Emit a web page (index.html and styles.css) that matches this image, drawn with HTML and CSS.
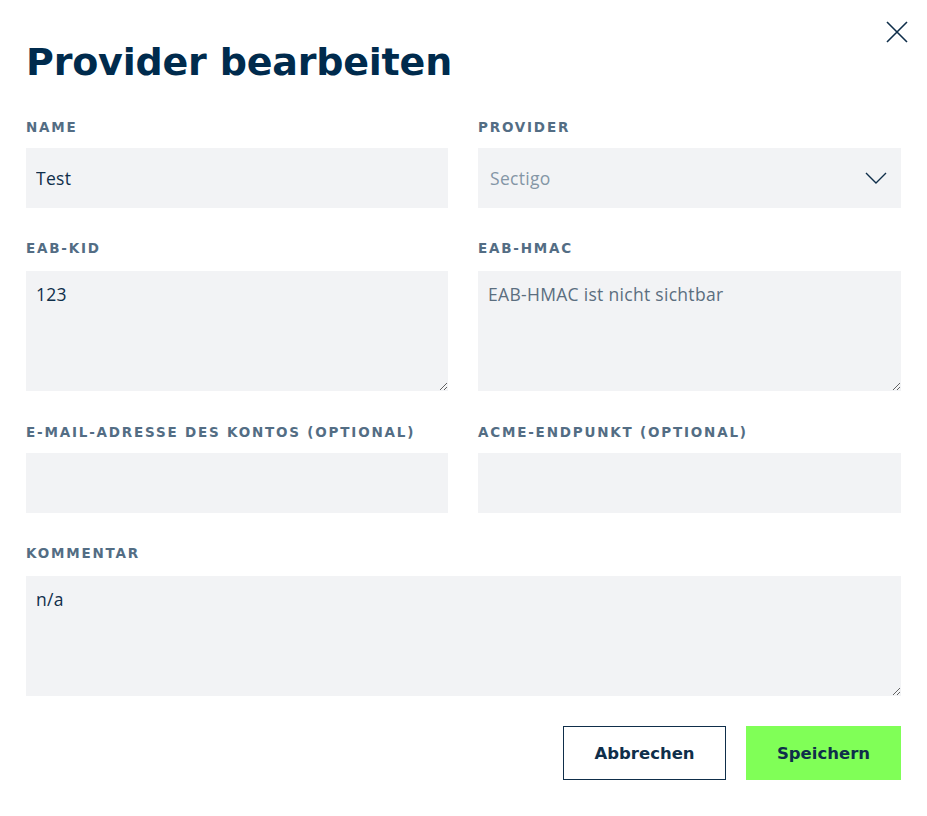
FILE: index.html
```html
<!DOCTYPE html>
<html lang="de">
<head>
<meta charset="utf-8">
<title>Provider bearbeiten</title>
<link rel="stylesheet" href="styles.css">
</head>
<body>
<div class="dialog">
  <button class="close" aria-label="Schließen">
    <svg width="24" height="24" viewBox="0 0 24 24"><path d="M2 2 L22 22 M22 2 L2 22" stroke="#0f2e4a" stroke-width="1.6" fill="none"/></svg>
  </button>
  <h1 class="title">Provider bearbeiten</h1>
  <form class="form">
    <div class="field">
      <label class="label">Name</label>
      <input class="input" type="text" value="Test">
    </div>
    <div class="field">
      <label class="label">Provider</label>
      <div class="select">
        <span class="select-value">Sectigo</span>
        <svg class="chevron" width="22" height="12" viewBox="0 0 22 12"><path d="M1 1 L11 11 L21 1" stroke="#0f2e4a" stroke-width="1.4" fill="none"/></svg>
      </div>
    </div>
    <div class="field">
      <label class="label label-ta">EAB-KID</label>
      <textarea class="textarea">123</textarea>
    </div>
    <div class="field">
      <label class="label label-ta">EAB-HMAC</label>
      <textarea class="textarea" placeholder="EAB-HMAC ist nicht sichtbar"></textarea>
    </div>
    <div class="field">
      <label class="label">E-Mail-Adresse des Kontos (optional)</label>
      <input class="input" type="text">
    </div>
    <div class="field">
      <label class="label">ACME-Endpunkt (optional)</label>
      <input class="input" type="text">
    </div>
    <div class="field wide">
      <label class="label label-ta">Kommentar</label>
      <textarea class="textarea">n/a</textarea>
    </div>
    <div class="actions wide">
      <button type="button" class="btn btn-outline">Abbrechen</button>
      <button type="button" class="btn btn-primary">Speichern</button>
    </div>
  </form>
</div>
</body>
</html>
```
FILE: styles.css
```css
* { box-sizing: border-box; }
html, body { margin: 0; padding: 0; background: #ffffff; }
body { font-family: "Inter", "Liberation Sans", sans-serif; color: #0f2e4a; }

.dialog {
  position: relative;
  width: 927px;
  padding: 36px 26px 30px 26px;
}

.close {
  position: absolute;
  top: 20px;
  right: 18px;
  border: 0;
  background: none;
  padding: 0;
  width: 24px;
  height: 24px;
  cursor: pointer;
}
.close svg { display: block; }

.title {
  margin: 0 0 31px 0;
  font-family: "DejaVu Sans", sans-serif;
  font-weight: 700;
  font-size: 38px;
  line-height: 52px;
  color: #002b4d;
  letter-spacing: -0.2px;
}

.form {
  display: grid;
  grid-template-columns: 422px 423px;
  column-gap: 30px;
  row-gap: 32px;
}

.field { display: flex; flex-direction: column; }
.wide { grid-column: 1 / -1; }

.label {
  font-family: "DejaVu Sans", sans-serif;
  font-weight: 700;
  font-size: 13.5px;
  line-height: 16px;
  letter-spacing: 1.8px;
  text-transform: uppercase;
  color: #536d84;
  margin-bottom: 13px;
}
.label-ta { margin-bottom: 15px; }

.input, .textarea, .select {
  display: block;
  width: 100%;
  border: 0;
  outline: none;
  background: #f2f3f5;
  font-family: "Open Sans", "Liberation Sans", sans-serif;
  font-size: 17.5px;
  letter-spacing: 0.3px;
  color: #0f2e4a;
  padding: 0 10px;
  margin: 0;
}
.input { height: 60px; }
.textarea {
  height: 120px;
  padding: 11px 10px;
  line-height: 24px;
  resize: vertical;
}
.textarea-row { margin-bottom: 1px; }
.textarea::placeholder { color: #5b6e7f; opacity: 1; }

.select {
  height: 60px;
  display: flex;
  align-items: center;
  justify-content: space-between;
  padding: 0 14px 0 12px;
}
.select-value { color: #8496a6; }
.chevron { display: block; }

.actions {
  display: flex;
  justify-content: flex-end;
  gap: 20px;
  margin-top: -2px;
}
.btn {
  height: 54px;
  font-family: "DejaVu Sans", sans-serif;
  font-weight: 700;
  font-size: 16.5px;
  color: #0f2e4a;
  cursor: pointer;
}
.btn-outline {
  width: 163px;
  background: #ffffff;
  border: 1px solid #0f2e4a;
}
.btn-primary {
  width: 155px;
  background: #80ff57;
  border: 0;
}
.form > .field:nth-child(3), .form > .field:nth-child(4) { padding-bottom: 1px; }
```
